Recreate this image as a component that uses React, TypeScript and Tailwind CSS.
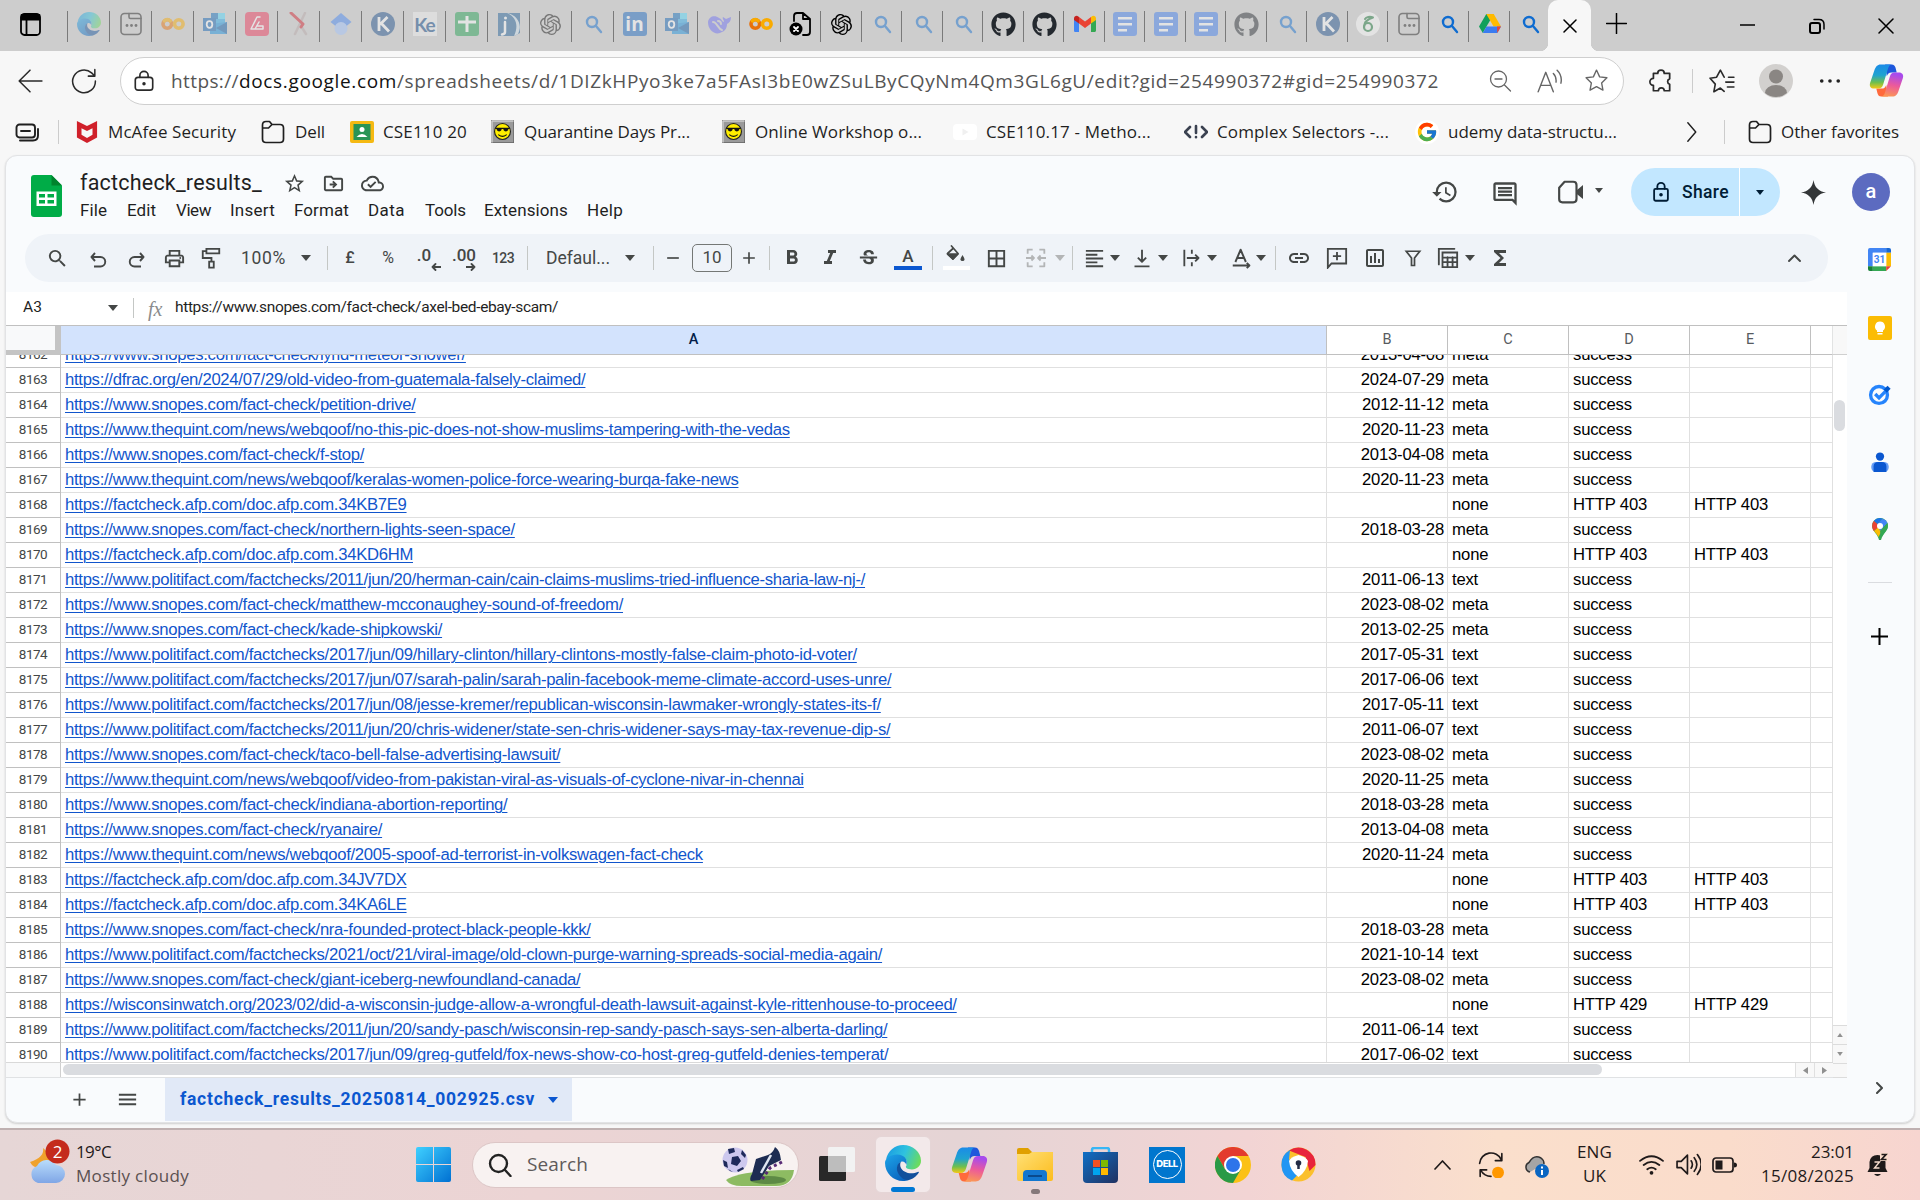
import { useLayoutEffect, useRef, useState, type ReactNode } from "react";
import { FaGithub } from "react-icons/fa";
import { FcGoogle } from "react-icons/fc";
import { SiOpenai } from "react-icons/si";
import {
  MdStarBorder, MdOutlineDriveFileMove, MdOutlineCloudDone, MdHistory, MdOutlineInsertComment,
  MdSearch, MdOutlinePrint, MdFormatBold, MdFormatItalic, MdStrikethroughS, MdBorderAll,
  MdFormatAlignLeft, MdLink, MdOutlineInsertChart, MdFunctions, MdMenu, MdAdd, MdRemove,
} from "react-icons/md";

/* Text that is tracked so that it fills exactly the given width. */
function Fit({ w, className = "", children }: { w: number; className?: string; children: string }) {
  const ref = useRef<HTMLSpanElement>(null);
  const [ls, setLs] = useState(0);
  useLayoutEffect(() => {
    if (ref.current) setLs((w - ref.current.getBoundingClientRect().width) / children.length);
  }, [w, children]);
  return (
    <span className="block shrink-0" style={{ width: w }}>
      <span ref={ref} className={"inline-block whitespace-pre " + className} style={{ letterSpacing: ls }}>{children}</span>
    </span>
  );
}

function Svg({ s = 24, h, vb = "0 0 24 24", className = "", sw = 1.5, children }: { s?: number; h?: number; vb?: string; className?: string; sw?: number; children: ReactNode }) {
  return (
    <svg width={s} height={h ?? s} viewBox={vb} fill="none" stroke="currentColor" strokeWidth={sw} strokeLinecap="round" strokeLinejoin="round" className={"shrink-0 " + className}>
      {children}
    </svg>
  );
}

/* ---------- logos ---------- */
const Defs = () => (
  <svg width="0" height="0" className="absolute">
    <defs>
      <linearGradient id="eg" x1="0" y1="0.3" x2="1" y2="0.6"><stop offset="0" stopColor="#1b9de2" /><stop offset=".5" stopColor="#2fc2df" /><stop offset="1" stopColor="#6ddc5a" /></linearGradient>
      <linearGradient id="eb" x1="0" y1="0" x2=".6" y2="1"><stop offset="0" stopColor="#1da4e8" /><stop offset="1" stopColor="#0a66c0" /></linearGradient>
      <linearGradient id="c1" x1="0" y1="0" x2="0" y2="1"><stop offset="0" stopColor="#1a8be8" /><stop offset=".45" stopColor="#1fa3cf" /><stop offset=".75" stopColor="#6fbf4d" /><stop offset="1" stopColor="#f5c815" /></linearGradient>
      <linearGradient id="c2" x1=".2" y1="0" x2="0" y2="1"><stop offset="0" stopColor="#a84bec" /><stop offset=".45" stopColor="#ec5a9a" /><stop offset="1" stopColor="#fda04b" /></linearGradient>
      <linearGradient id="cl" x1="0" y1="0" x2="0" y2="1"><stop offset="0" stopColor="#b9dcfb" /><stop offset="1" stopColor="#7fa6e6" /></linearGradient>
      <linearGradient id="wn" x1="0" y1="0" x2="1" y2="1"><stop offset="0" stopColor="#3fd0ff" /><stop offset="1" stopColor="#0070d2" /></linearGradient>
      <linearGradient id="fo" x1="0" y1="0" x2="1" y2="1"><stop offset="0" stopColor="#ffe076" /><stop offset="1" stopColor="#fcbc1d" /></linearGradient>
      <linearGradient id="st" x1="0" y1="0" x2="1" y2="1"><stop offset="0" stopColor="#0f6fc6" /><stop offset="1" stopColor="#213160" /></linearGradient>
    </defs>
  </svg>
);
const Edge = ({ s = 24 }) => (
  <Svg s={s}>
    <g stroke="none">
      <path fill="url(#eg)" d="M.7 9.5C2 4 6.5 0 12 0c6.7 0 12 4.8 12 10.500 0 3.500-2.800 5.800-6 5.800-3.500 0-4.400-1.300-4-2.100C15.500 12 14.500 7.300 9 7.300 5 7.300 1.600 8.500.7 9.500Z" />
      <path fill="url(#eb)" d="M0 12c0-3 3.500-5.600 8-5.600 5 0 7.500 3.600 6.200 7-.4-1.900-2.200-2.800-3.600-2.100-2.100 1.200-2.600 3.700-1.900 6 1.100 3.400 4.300 5.700 7.300 6-1.200.5-2.600.7-4 .7C5.400 24 0 18.600 0 12Z" />
      <path fill="#11509c" d="M10.600 11.300C8.100 12.300 7.500 15 8.200 17.500 9.500 21.500 13.500 24.200 16.500 23.200c3-.9 4.800-2.900 6-4.700.3-.5-.2-.8-.7-.5-4.300 2-10.300.5-11.500-3.500-.3-1.300-.2-2.500.3-3.200Z" />
    </g>
  </Svg>
);
const Copilot = ({ s = 34 }) => (
  <Svg s={s}>
    <g stroke="none">
      <path fill="#1d57dc" d="M11 1h4.500c1.600 0 2.300 1 2.700 2.300L19 6.500h-3.500c-2 0-2.700 1-3.300 2.500Z" />
      <path fill="#ff6a3c" d="M13 23H8.500c-1.600 0-2.300-1-2.700-2.300L5 17.500h3.500c2 0 2.700-1 3.300-2.500Z" />
      <path fill="url(#c1)" d="M15.800 1H8C5.700 1 4.500 2.600 3.700 5L.8 13.500C0 16 1.300 17.500 3.400 17.500h3c1.800 0 2.800-1 3.300-2.700L13 4c.5-1.700 1.200-3 2.800-3Z" />
      <path fill="url(#c2)" d="M8.200 23H16c2.300 0 3.500-1.600 4.300-4l2.900-8.500c.8-2.500-.5-4-2.600-4h-3c-1.800 0-2.800 1-3.300 2.700L11 20c-.5 1.700-1.200 3-2.800 3Z" />
    </g>
  </Svg>
);
const Colab = () => (
  <Svg s={24} sw={3.6}>
    <circle cx="6.300" cy="12" r="4.300" stroke="#e8710a" /><circle cx="17.800" cy="12" r="4.300" stroke="#f9ab00" /><path stroke="#f9ab00" d="M3.400 8.800a4.300 4.300 0 0 1 5.800 0" />
  </Svg>
);
const Outlook = () => (
  <Svg><g stroke="none"><path fill="#28a8ea" d="M8 1h14v12H8z" /><path fill="#0f6cbd" d="M8 1h7v6H8z" /><path fill="#50d9ff" d="M15 1h7v6h-7z" /><path fill="#1490df" d="M7 12 24 10v12H7z" /><path fill="#0a5ca8" d="M24 10v12L13 16Z" /><rect y="6" width="13" height="13" fill="#0f62b4" /></g><ellipse cx="6.500" cy="12.500" rx="2.800" ry="3.300" stroke="#fff" strokeWidth="1.800" /></Svg>
);
const Mag = () => <Svg sw={2.4} className="text-[#0f6cd0]"><circle cx="11" cy="10" r="5" /><path d="m15 14 5 6" /></Svg>;
const Docs = () => <Svg><g stroke="none"><rect width="24" height="24" rx="3" fill="#3d7df0" /><path fill="#fff" d="M5 5h14v2.500H5zM5 11h14v2.500H5zM5 17h9v2.500H5z" /></g></Svg>;
const PageDots = () => <Svg sw={1.6} className="text-[#222]"><rect x="2" y="1.500" width="20" height="21" rx="3.500" /><path d="M10 1.500v3.500q0 1.500 1.500 1.500H22" /><g fill="currentColor" stroke="none"><circle cx="8" cy="13.500" r="1.400" /><circle cx="12.500" cy="13.500" r="1.400" /><circle cx="17" cy="13.500" r="1.400" /></g></Svg>;
const KLogo = () => <Svg><circle cx="12" cy="12" r="12" fill="#1b4f8c" stroke="none" /><path d="M8 5v14M16.500 5 9 12.500M10 11l8 8.500" stroke="#fff" strokeWidth="2.800" strokeLinecap="butt" /></Svg>;
const GitHub = () => <FaGithub size={25} className="text-[#24292f]" />;
const Drive = () => <Svg><g stroke="none"><path fill="#11a05b" d="M8.300 2h7.400L4.800 21 1 14.600Z" /><path fill="#ffba00" d="M8.300 2h7.400L23 14.600h-7.400Z" /><path fill="#3b7cf0" d="M8.500 14.600H23L19.300 21H4.800Z" /><path fill="#ea4335" d="M19 14.600h4L19.300 21Z" /></g></Svg>;
const Gmail = () => <Svg><g stroke="none"><path fill="#4285f4" d="M1 7v11.500c0 1 .6 1.500 1.500 1.500H6V10Z" /><path fill="#34a853" d="M18 10v10h3.500c.9 0 1.500-.6 1.500-1.500V7Z" /><path fill="#ea4335" d="M6 5v6.500l6 4.500 6-4.500V5l-6 4.600Z" /><path fill="#c5221f" d="M1 6.500C1 4 3.800 3.200 5.300 4.400L6 5v6.500L1 8Z" /><path fill="#fbbc04" d="M23 6.500c0-2.500-2.800-3.300-4.300-2.100L18 5v6.500L23 8Z" /></g></Svg>;

const Letter = ({ bg, children }: { bg: string; children: ReactNode }) => <div className={"flex size-6 items-center justify-center leading-none font-bold " + bg}>{children}</div>;

const wideTabs: [ReactNode, boolean][] = [
  [<Edge />, true],
  [<PageDots />, true],
  [<Colab />, true],
  [<Outlook />, true],
  [<Svg><rect width="24" height="24" rx="4" fill="#f0355a" stroke="none" /><path d="M15 5h-3L6 17h4l4-7M10 17h8v-3h-6" stroke="#fff" /></Svg>, true],
  [<Svg sw={2.5}><path d="M18 1 8 22M14 14l5 8" stroke="#b9a9a9" /><path d="m4 1 12 11-2 3" stroke="#d3202c" strokeWidth="3" /></Svg>, true],
  [<Svg><path fill="#4285f4" stroke="none" d="M12 1 1.500 10l5 4h11l5-4Z" /><circle cx="12" cy="16.500" r="6.500" fill="#a0c3ff" stroke="none" /></Svg>, true],
  [<KLogo />, true],
  [<Letter bg="bg-[#f1f1f1] text-[#0b4686] text-[19px] font-['Lato'] tracking-[-1px]">Ke</Letter>, true],
  [<Svg><rect width="24" height="24" rx="3" fill="#1fa051" stroke="none" /><path d="M12 4v16M3 10h18" stroke="#fff" strokeWidth="3" strokeLinecap="butt" /></Svg>, true],
  [<Svg><path fill="#1d5d96" stroke="none" d="M1 1h22v20l-6 3H1z" /><path fill="#cfe3f0" stroke="none" d="M10 1c9 4 12 12 7 23l4-2C26 12 20 3 10 1Z" /><path d="M8 10v10q0 2-3 2.500" stroke="#fff" strokeWidth="2.500" /><circle cx="8.500" cy="6" r="1.500" fill="#fff" stroke="none" /></Svg>, true],
  [<SiOpenai size={21} className="text-[#111]" />, true],
  [<Mag />, true],
  [<Letter bg="rounded-[3px] bg-[#1667c0] text-white text-[19px] font-['Open_Sans']">in</Letter>, true],
  [<Outlook />, true],
  [<Svg><path fill="#6a6cf6" stroke="none" d="M1 10C2 4 8 3 12 6c3 1 3 4 5 4 0-2-2-3-1-5 1 1 2 1 3 2l5-2c0 4-2 6-4 7 0 4-2 7-5 8-6 4-14-1-14-10Z" /><path d="M6 10c4 0 5 7 9 8M11 9c2 0 3 1 3 3" stroke="#cdcdcd" strokeWidth="2" /></Svg>, true],
];
const tightTabs: [ReactNode, boolean][] = [
  [<Colab />, false],
  [<Svg sw={1.8} className="text-black"><path d="M5 9V4q0-3 3-3h6l7 6v13q0 3-3 3h-4M14 1v6h7" /><circle cx="7" cy="17" r="6.500" fill="#000" stroke="none" /><path d="m5 15 4 4m0-4-4 4" stroke="#fff" /></Svg>, false],
  [<SiOpenai size={21} className="text-black" />, false],
  [<Mag />, true],
  [<Mag />, true],
  [<Mag />, true],
  [<GitHub />, false],
  [<GitHub />, false],
  [<Gmail />, false],
  [<Docs />, true],
  [<Docs />, true],
  [<Docs />, true],
  [<GitHub />, true],
  [<Mag />, true],
  [<KLogo />, true],
  [<Svg><circle cx="12" cy="12" r="12" fill="#fff" stroke="none" /><circle cx="12" cy="15" r="4" stroke="#1c7a3b" strokeWidth="2.200" /><path d="M8 15C8 9 12 7 17 5.500 14 4 10 5 9 7" stroke="#1c7a3b" strokeWidth="2" /></Svg>, true],
  [<PageDots />, true],
  [<Mag />, false],
  [<Drive />, false],
  [<Mag />, false],
];

function TabBar() {
  const cell = ([icon, faded]: [ReactNode, boolean], i: number, w: string) => (
    <div key={i} className={"flex h-[31px] shrink-0 items-center justify-center border-l border-[#7a7a7a] pb-[5px] " + w}>
      <span className={faded ? "opacity-45" : ""}>{icon}</span>
    </div>
  );
  return (
    <div className="flex h-[51px] bg-[#cdcdcd] text-black">
      <div className="flex w-[67px] shrink-0 items-start justify-start pt-[13px] pl-[20px]">
        <Svg s={21} h={23} vb="0 0 21 23" sw={1.8}><rect x="1" y="1" width="19" height="21" rx="3.500" /><path d="M1.500 2h18v4.500h-18z" fill="currentColor" /><path d="M6.500 7v15" /></Svg>
      </div>
      <div className="mt-[11px] flex shrink-0">{wideTabs.map((t, i) => cell(t, i, "w-[42px]"))}</div>
      <div className="mt-[11px] flex w-[809px] shrink-0">{tightTabs.map((t, i) => cell(t, i, "w-[40.5px] pl-[2px]"))}</div>
      <div className="flex shrink-0 items-end">
        <div className="-ml-2 size-2 bg-[radial-gradient(circle_at_0_0,#cdcdcd_8px,#f7f7f7_8.500px)]" />
        <div className="flex h-[51px] w-[43px] items-center justify-center rounded-t-[10px] bg-[#f7f7f7]"><Svg s={14} vb="0 0 14 14"><path d="m1 1 12 12M13 1 1 13" /></Svg></div>
        <div className="size-2 bg-[radial-gradient(circle_at_100%_0,#cdcdcd_8px,#f7f7f7_8.500px)]" />
      </div>
      <Svg s={21} vb="0 0 21 21" className="mt-[13px] ml-[7px]"><path d="M10.500.5v20M.5 10.500h20" /></Svg>
      <Svg s={15} vb="0 0 15 15" className="mt-[17px] ml-[113px]"><path d="M0 8h15" /></Svg>
      <Svg s={16} vb="0 0 16 16" className="mt-[18px] ml-[54px]"><rect x="1" y="5" width="10" height="10" rx="2" strokeWidth="2" /><path d="M5 1.500h5q5 0 5 5V11" /></Svg>
      <Svg s={16} vb="0 0 16 16" className="mt-[18px] ml-[53px]"><path d="m1 1 14 14M15 1 1 15" /></Svg>
    </div>
  );
}

const Star = "m12 2 3 6.500 7 .9-5.100 4.900 1.300 7L12 17.900l-6.200 3.400 1.300-7L2 9.400l7-.9Z";

function AddressBar() {
  return (
    <div className="flex h-[59px] items-center text-[#2a2a2a]">
      <Svg s={26} className="ml-[17px]" sw={1.4}><path d="M23 12H2M12 2 2 12l10 10" /></Svg>
      <Svg s={26} className="ml-[28px]" sw={1.4}><path d="M22.500 12A10.500 10.500 0 1 1 19 4.500L21.500 7M22 1.500V7.500h-6" /></Svg>
      <div className="ml-[23px] flex h-[48px] w-[1504px] shrink-0 items-center rounded-full border border-[#cfcfcf] bg-white">
        <Svg s={22} className="ml-[12px]" sw={1.8}><rect x="2.500" y="8" width="19" height="14" rx="3" /><path d="M7.500 8V6a4.500 4.500 0 0 1 9 0v2" /><circle cx="12" cy="15" r="1" fill="currentColor" /></Svg>
        <div className="ml-[16px] flex pt-px font-['Open_Sans'] text-[19px] text-[#555]">
          <Fit w={68}>https://</Fit>
          <Fit w={158} className="text-[#111]">docs.google.com</Fit>
          <Fit w={1042}>/spreadsheets/d/1DIZkHPyo3ke7a5FAsI3bE0wZSuLByCQyNm4Qm3GL6gU/edit?gid=254990372#gid=254990372</Fit>
        </div>
        <Svg s={24} className="ml-[49px] text-[#666]" sw={1.3}><circle cx="10.500" cy="10" r="8" /><path d="M7 10h7m2.500 6 6 6" /></Svg>
        <Svg s={26} className="ml-[24px] text-[#666]" sw={1.3}><path d="m2 22 7-18 7 18M4.500 16h9M16 5q3 3 2.500 8M19.500 2q5 5 3.500 12" /></Svg>
        <Svg s={25} className="ml-[22px] text-[#666]" sw={1.3}><path d={Star} /></Svg>
      </div>
      <Svg s={26} className="ml-[24px]" sw={1.6}><path d="M5 5h4a3 3 0 0 1 6 0h5v5a2.600 2.600 0 0 0 0 5v6h-5a2.700 2.700 0 0 0-5.400 0H5v-5a3.200 3.200 0 1 1 0-6.500Z" /></Svg>
      <div className="ml-[18px] h-[24px] w-px bg-[#ccc]" />
      <Svg s={26} className="ml-[16px]" sw={1.5}><path d="M18 8.500h5M15.500 13h7.500M17 17.500h6M14 21.500l-3.500-3-6 3.400 1.300-7L1 9.400l6-.9L10.500 2l3.500 6.500" /></Svg>
      <svg width="34" height="34" viewBox="0 0 34 34" className="ml-[24px] shrink-0"><circle cx="17" cy="17" r="17" fill="#d2d0ce" /><circle cx="17" cy="12.500" r="7" fill="#8a8683" /><path fill="#8a8683" d="M6 29a11 8 0 0 1 22 0 17 17 0 0 1-22 0Z" /></svg>
      <Svg s={22} className="ml-[26px]" sw={0}><g fill="#222"><circle cx="3" cy="12" r="2" /><circle cx="12" cy="12" r="2" /><circle cx="21" cy="12" r="2" /></g></Svg>
      <div className="ml-[28px]"><Copilot s={35} /></div>
    </div>
  );
}

const Folder = () => <Svg s={24} sw={1.7}><path d="M1.500 5q0-3.500 3.500-3.500h3.500L11 4.500h8q3.500 0 3.500 3.500v11q0 3.500-3.500 3.500H5q-3.500 0-3.500-3.500ZM1.500 8h6L11 4.500" /></Svg>;
const Smiley = () => <Svg s={23}><rect width="24" height="24" fill="#9a9a9a" stroke="#666" /><path d="M1 23V1h22" stroke="#d0d0d0" /><circle cx="12" cy="12" r="8.300" fill="#ffee00" stroke="#222" strokeWidth="1.200" /><path d="M6 8.500h5v2q-1 1.500-2.500 1.500T6 10.500ZM13 8.500h5v2q-1 1.500-2.500 1.500T13 10.500Z" fill="#111" stroke="none" /><path d="M5 8.700h14M8 15.500q4 3 8 0" stroke="#111" strokeWidth="1.200" /></Svg>;

function Bookmarks() {
  return (
    <div className="flex h-[45px] items-center pb-[2px] font-['Open_Sans'] text-[17px] text-[#1f1f1f]">
      <Svg s={24} className="ml-[15px]" sw={1.9}><rect x="1.500" y="4.500" width="18.500" height="13" rx="3" /><path d="M6 11h9M5 20.500h13q5 0 5-5V9" /></Svg>
      <div className="ml-[19px] h-[24px] w-px bg-[#ccc]" />
      <Svg s={22} h={24} className="ml-[17px]"><path stroke="none" fill="#d0202a" d="M1 0 12 5.500 23 0v18L12 24 1 18ZM6 8v7l6 3.500 6-3.500V8l-6 3Z" /></Svg>
      <div className="ml-[10px]"><Fit w={128}>McAfee Security</Fit></div>
      <div className="ml-[25px]"><Folder /></div>
      <div className="ml-[10px]"><Fit w={30}>Dell</Fit></div>
      <Svg s={24} className="ml-[25px]"><g stroke="none"><rect y="1" width="24" height="22" rx="2" fill="#f5b912" /><rect x="3.500" y="4" width="17" height="16" fill="#2a9455" /><circle cx="12" cy="9.500" r="2.500" fill="#fff" /><path fill="#fff" d="M6.500 17q5.500-6 11 0Z" /></g></Svg>
      <div className="ml-[9px]"><Fit w={84}>CSE110 20</Fit></div>
      <div className="ml-[24px]"><Smiley /></div>
      <div className="ml-[10px]"><Fit w={166}>Quarantine Days Pr...</Fit></div>
      <div className="ml-[32px]"><Smiley /></div>
      <div className="ml-[10px]"><Fit w={167}>Online Workshop o...</Fit></div>
      <Svg s={24} className="ml-[31px]"><g stroke="none"><rect y="4" width="24" height="16" rx="4" fill="#fff" /><path fill="#f0f0f0" d="m9.500 8.500 6 3.500-6 3.500Z" /></g></Svg>
      <div className="ml-[9px]"><Fit w={165}>CSE110.17 - Metho...</Fit></div>
      <Svg s={24} className="ml-[33px] text-[#3a4150]" sw={2.6}><path d="m6 7-5 5 5 5M18 7l5 5-5 5M12 6v7M12 17v.2" /></Svg>
      <div className="ml-[9px]"><Fit w={172}>Complex Selectors -...</Fit></div>
      <div className="ml-[26px] flex size-[24px] items-center justify-center rounded-full bg-white"><FcGoogle size={22} /></div>
      <div className="ml-[9px]"><Fit w={169}>udemy data-structu...</Fit></div>
      <Svg s={20} className="ml-[65px]" sw={1.7}><path d="m7 1 9.500 11L7 23" /></Svg>
      <div className="ml-[22px] h-[24px] w-px bg-[#ccc]" />
      <div className="ml-[23px]"><Folder /></div>
      <div className="ml-[9px]"><Fit w={118}>Other favorites</Fit></div>
    </div>
  );
}

/* ---------- sheet header ---------- */
const Tri = ({ m, dim = false }: { m: string; dim?: boolean }) => <svg width="10" height="6" viewBox="0 0 10 6" className={"shrink-0 " + m}><path d="M0 0h10L5 6Z" fill={dim ? "#b3b5b6" : "#444746"} /></svg>;
const Sep = ({ m }: { m: string }) => <div className={"h-[24px] w-px shrink-0 bg-[#c4c7c5] " + m} />;
const Cell = ({ m, w = "w-[24px]", children }: { m: string; w?: string; children: ReactNode }) => <div className={`flex h-[24px] shrink-0 items-center justify-center ${w} ${m}`}>{children}</div>;

const menus: [string, number, string][] = [
  ["File", 27, ""], ["Edit", 29, "ml-[20px]"], ["View", 35, "ml-[20px]"], ["Insert", 45, "ml-[19px]"], ["Format", 55, "ml-[19px]"],
  ["Data", 37, "ml-[19px]"], ["Tools", 41, "ml-[20px]"], ["Extensions", 84, "ml-[18px]"], ["Help", 36, "ml-[19px]"],
];

function Header() {
  return (
    <div className="flex h-[78px] text-[#444746]">
      <svg width="31" height="42" viewBox="0 0 31 42" className="mt-[19px] ml-[25px] shrink-0"><path fill="#00ac47" d="M3 0h17.500L31 10.500V39a3 3 0 0 1-3 3H3a3 3 0 0 1-3-3V3a3 3 0 0 1 3-3Z" /><path fill="#00832d" d="M20.500 0 31 10.500H20.500Z" /><path fill="#fff" fillRule="evenodd" d="M5.500 16.500h20v14.500h-20ZM8 19v3.500h6V19Zm8.500 0v3.500H23V19ZM8 25v3.500h6V25Zm8.500 0v3.500H23V25Z" /></svg>
      <div className="ml-[18px] w-[560px] font-['Roboto']">
        <div className="mt-[13px] flex h-[28px] items-center">
          <Fit w={182} className="text-[21.5px] text-[#1f1f1f]">factcheck_results_</Fit>
          <MdStarBorder size={23} className="ml-[21px]" />
          <MdOutlineDriveFileMove size={23} className="ml-[16px]" />
          <MdOutlineCloudDone size={23} className="ml-[16px]" />
        </div>
        <div className="mt-[2px] flex h-[24px] items-center text-[17px] text-[#1f1f1f]">
          {menus.map(([t, w, m]) => <div key={t} className={m}><Fit w={w}>{t}</Fit></div>)}
        </div>
      </div>
      <div className="mt-[12px] mr-[24px] ml-auto flex h-[48px] items-center">
        <MdHistory size={28} />
        <MdOutlineInsertComment size={28} className="mt-[3px] ml-[32px]" />
        <Svg s={26} className="ml-[38px]" sw={2}><path d="M7 2.500h8q3 0 3 3v13q0 3-3 3H5q-3 0-3-3V8Z" /><path d="M18 10.500 24 5.500v13l-6-5Z" fill="currentColor" stroke="none" /></Svg>
        <svg width="8" height="5" viewBox="0 0 8 5" className="-mt-[4px] ml-[12px]"><path d="M0 0h8L4 5Z" fill="#444746" /></svg>
        <div className="ml-[28px] flex h-[48px] w-[149px] items-center rounded-full bg-[#c2e7ff] text-[#001d35]">
          <Svg s={22} className="ml-[19px]" sw={2}><rect x="4.500" y="8.500" width="15" height="13" rx="1.500" /><path d="M8 8.500V6a4 4 0 0 1 8 0v2.500" /><circle cx="12" cy="15" r="1" fill="currentColor" /></Svg>
          <div className="ml-[10px] font-['Roboto'] text-[17.5px] font-medium"><Fit w={47}>Share</Fit></div>
          <div className="ml-[10px] h-full w-px bg-white" />
          <svg width="8" height="5" viewBox="0 0 8 5" className="ml-[16px]"><path d="M0 0h8L4 5Z" fill="#001d35" /></svg>
        </div>
        <svg width="25" height="25" viewBox="0 0 24 24" className="ml-[21px]"><path fill="#333638" d="M12 0c1 7 5 11 12 12-7 1-11 5-12 12C11 17 7 13 0 12 7 11 11 7 12 0Z" /></svg>
        <div className="ml-[26px] flex size-[38px] items-center justify-center rounded-full bg-[#5c6bc0] pb-[2px] font-['Roboto'] text-[20px] font-medium text-white">a</div>
      </div>
    </div>
  );
}

function Toolbar() {
  return (
    <div className="ml-[19px] flex h-[48px] w-[1803px] items-center rounded-full bg-[#eff3f8] font-['Roboto'] text-[#444746]">
      <Cell m="ml-[20px]"><MdSearch size={23} /></Cell>
      <Cell m="ml-[17px]"><Svg s={17} vb="0 0 17 17" sw={1.9} className="mt-1"><path d="M5 1 1.500 5 5 9M2 5h8.500a4.500 4.500 0 0 1 0 9.500H4" strokeLinecap="butt" /></Svg></Cell>
      <Cell m="ml-[14px]"><Svg s={17} vb="0 0 17 17" sw={1.9} className="mt-1"><path d="m12 1 3.500 4L12 9M15 5H6.500a4.500 4.500 0 0 0 0 9.500H13" strokeLinecap="butt" /></Svg></Cell>
      <Cell m="ml-[14px]"><MdOutlinePrint size={23} /></Cell>
      <Cell m="ml-[13px]"><Svg s={22} sw={2}><path d="M7 2h14v5H7ZM7 4.500H3V12h9.500v4M10 16h5v6.500h-5Z" strokeLinejoin="miter" /></Svg></Cell>
      <div className="ml-[18px] text-[17.5px]"><Fit w={45}>100%</Fit></div>
      <Tri m="ml-[15px]" /><Sep m="ml-[16px]" />
      <Cell m="ml-[10px]"><span className="text-[16px] font-medium">£</span></Cell>
      <Cell m="ml-[14px]"><span className="text-[16px]">%</span></Cell>
      <Cell m="ml-[15px]"><div className="relative pt-[1px] pr-[6px] pb-[7px] text-[17px] leading-[18px] font-medium">.0<Svg s={10} vb="0 0 10 8" h={8} className="absolute right-[-4px] bottom-0" sw={1.8}><path d="M10 4H1.500M4.500 1l-3 3 3 3" /></Svg></div></Cell>
      <Cell m="ml-[13px]"><div className="relative pt-[1px] pb-[7px] text-[17px] leading-[18px] font-medium">.00<Svg s={10} vb="0 0 10 8" h={8} className="absolute right-0 bottom-0" sw={1.8}><path d="M0 4h8.500M5.500 1l3 3-3 3" /></Svg></div></Cell>
      <div className="ml-[16px] text-[14px] font-medium"><Fit w={22}>123</Fit></div>
      <Sep m="ml-[13px]" />
      <div className="ml-[18px] text-[17.5px]"><Fit w={64}>Defaul...</Fit></div>
      <Tri m="ml-[15px]" /><Sep m="ml-[18px]" />
      <Cell m="ml-[7px]"><MdRemove size={20} /></Cell>
      <div className="ml-[7px] flex h-[28px] w-[40px] items-center justify-center rounded-[5px] border border-[#747775] text-[17px]">10</div>
      <Cell m="ml-[5px]"><MdAdd size={20} /></Cell>
      <Sep m="ml-[8px]" />
      <Cell m="ml-[10px]"><MdFormatBold size={24} /></Cell>
      <Cell m="ml-[14px]"><MdFormatItalic size={24} /></Cell>
      <Cell m="ml-[14px]"><MdStrikethroughS size={23} /></Cell>
      <Cell m="ml-[14px]" w="w-[28px]"><div className="flex flex-col items-center"><span className="text-[17px] leading-[18px] font-medium">A</span><span className="mt-[1px] h-[4px] w-[28px] bg-[#0b57d0]" /></div></Cell>
      <Sep m="ml-[10px]" />
      <Cell m="ml-[9px]" w="w-[28px]"><div className="flex flex-col items-center pb-[2px]"><Svg s={20} h={19} vb="0 0 20 19" sw={1.7}><path d="M5.500 1 12 8.500 7 14 1.500 8.500 7 3.500" /><path d="M1.500 9H12l-5 5Z" fill="currentColor" /><path d="M16.500 10q4 6 0 6t0-6" fill="currentColor" stroke="none" /></Svg><span className="mt-[2px] h-[4px] w-[27px] bg-white" /></div></Cell>
      <Cell m="ml-[14px]"><MdBorderAll size={23} /></Cell>
      <Cell m="ml-[16px]"><Svg s={20} sw={2.2} className="text-[#b3b5b6]"><path d="M8 2H2v5M16 2h6v5M8 22H2v-5M16 22h6v-5M0 12h9M6.500 9l3 3-3 3M24 12h-9M17.500 9l-3 3 3 3" strokeLinecap="butt" /></Svg></Cell>
      <Tri m="ml-[7px]" dim /><Sep m="ml-[7px]" />
      <Cell m="ml-[9px]"><MdFormatAlignLeft size={23} /></Cell><Tri m="ml-[4px]" />
      <Cell m="ml-[10px]"><Svg s={20} h={20} sw={2.2}><path d="M12 2v14M7 11.500l5 5 5-5M3 22h18" strokeLinecap="butt" /></Svg></Cell><Tri m="ml-[4px]" />
      <Cell m="ml-[11px]"><Svg s={20} sw={2.2}><path d="M4 2v20M13 2v5M13 17v5M7 12h14M17 8l4 4-4 4" strokeLinecap="butt" /></Svg></Cell><Tri m="ml-[4px]" />
      <Cell m="ml-[12px]"><Svg s={21} sw={2.2}><path d="m5 16 6-14 6 14M7 11.500h8M2 20h19M18 17l3 3-3 3" strokeLinecap="butt" /></Svg></Cell><Tri m="ml-[3px]" />
      <Sep m="ml-[9px]" />
      <Cell m="ml-[11px]"><MdLink size={24} /></Cell>
      <Cell m="ml-[14px]"><Svg s={22} sw={2}><path d="M2 22.500V2h20v16H6ZM12 5.500v9M7.500 10h9" strokeLinejoin="miter" strokeLinecap="butt" /></Svg></Cell>
      <Cell m="ml-[14px]"><MdOutlineInsertChart size={24} /></Cell>
      <Cell m="ml-[14px]"><Svg s={18} sw={2.3}><path d="M3 3h18l-7 9v10h-4V12Z" strokeLinejoin="miter" /></Svg></Cell>
      <Cell m="ml-[11px]"><Svg s={22} sw={2}><path d="M2 19V2h17M6 6h16v16H6ZM6 11.500h16M6 16.500h16M11.500 11v11M17 11v11" strokeLinejoin="miter" /></Svg></Cell>
      <Tri m="ml-[5px]" />
      <Cell m="ml-[13px]"><MdFunctions size={24} /></Cell>
      <div className="mr-[22px] ml-auto"><Cell m=""><Svg s={13} vb="0 0 13 8" h={8} sw={1.9}><path d="m1 7 5.500-5.500L12 7" /></Svg></Cell></div>
    </div>
  );
}

function FormulaBar() {
  return (
    <div className="flex h-[33px] items-center bg-white pb-[2px] font-['Roboto'] text-[#1f1f1f]">
      <div className="ml-[17px] text-[15.5px]"><Fit w={19}>A3</Fit></div>
      <Tri m="ml-[66px]" />
      <div className="ml-[15px] h-[20px] w-px bg-[#c4c7c5]" />
      <span className="ml-[14px] w-[27px] pt-[2px] font-['Liberation_Serif'] text-[20px] leading-none text-[#8a8c8d] italic">fx</span>
      <Fit w={383} className="text-[15.5px]">https://www.snopes.com/fact-check/axel-bed-ebay-scam/</Fit>
    </div>
  );
}

/* ---------- grid ---------- */
const S = "https://www.snopes.com/fact-check/", P = "https://www.politifact.com/factchecks/", Q = "https://www.thequint.com/news/webqoof/", A = "https://factcheck.afp.com/doc.afp.com.";
const rows: [string, string, string, string, string?][] = [
  [S + "lyrid-meteor-shower/", "2013-04-08", "meta", "success"],
  ["https://dfrac.org/en/2024/07/29/old-video-from-guatemala-falsely-claimed/", "2024-07-29", "meta", "success"],
  [S + "petition-drive/", "2012-11-12", "meta", "success"],
  [Q + "no-this-pic-does-not-show-muslims-tampering-with-the-vedas", "2020-11-23", "meta", "success"],
  [S + "f-stop/", "2013-04-08", "meta", "success"],
  [Q + "keralas-women-police-force-wearing-burqa-fake-news", "2020-11-23", "meta", "success"],
  [A + "34KB7E9", "", "none", "HTTP 403", "HTTP 403"],
  [S + "northern-lights-seen-space/", "2018-03-28", "meta", "success"],
  [A + "34KD6HM", "", "none", "HTTP 403", "HTTP 403"],
  [P + "2011/jun/20/herman-cain/cain-claims-muslims-tried-influence-sharia-law-nj-/", "2011-06-13", "text", "success"],
  [S + "matthew-mcconaughey-sound-of-freedom/", "2023-08-02", "meta", "success"],
  [S + "kade-shipkowski/", "2013-02-25", "meta", "success"],
  [P + "2017/jun/09/hillary-clinton/hillary-clintons-mostly-false-claim-photo-id-voter/", "2017-05-31", "text", "success"],
  [P + "2017/jun/07/sarah-palin/sarah-palin-facebook-meme-climate-accord-uses-unre/", "2017-06-06", "text", "success"],
  [P + "2017/jun/08/jesse-kremer/republican-wisconsin-lawmaker-wrongly-states-its-f/", "2017-05-11", "text", "success"],
  [P + "2011/jun/20/chris-widener/state-sen-chris-widener-says-may-tax-revenue-dip-s/", "2011-06-07", "text", "success"],
  [S + "taco-bell-false-advertising-lawsuit/", "2023-08-02", "meta", "success"],
  [Q + "video-from-pakistan-viral-as-visuals-of-cyclone-nivar-in-chennai", "2020-11-25", "meta", "success"],
  [S + "indiana-abortion-reporting/", "2018-03-28", "meta", "success"],
  [S + "ryanaire/", "2013-04-08", "meta", "success"],
  [Q + "2005-spoof-ad-terrorist-in-volkswagen-fact-check", "2020-11-24", "meta", "success"],
  [A + "34JV7DX", "", "none", "HTTP 403", "HTTP 403"],
  [A + "34KA6LE", "", "none", "HTTP 403", "HTTP 403"],
  [S + "nra-founded-protect-black-people-kkk/", "2018-03-28", "meta", "success"],
  [P + "2021/oct/21/viral-image/old-clown-purge-warning-spreads-social-media-again/", "2021-10-14", "text", "success"],
  [S + "giant-iceberg-newfoundland-canada/", "2023-08-02", "meta", "success"],
  ["https://wisconsinwatch.org/2023/02/did-a-wisconsin-judge-allow-a-wrongful-death-lawsuit-against-kyle-rittenhouse-to-proceed/", "", "none", "HTTP 429", "HTTP 429"],
  [P + "2011/jun/20/sandy-pasch/wisconsin-rep-sandy-pasch-says-sen-alberta-darling/", "2011-06-14", "text", "success"],
  [P + "2017/jun/09/greg-gutfeld/fox-news-show-co-host-greg-gutfeld-denies-temperat/", "2017-06-02", "text", "success"],
];
const cols = "grid grid-cols-[55px_1266px_121px_121px_121px_121px_22px]";

function Grid() {
  return (
    <div className="flex h-[753px] border-t border-[#c0c0c0] bg-white">
      <div className="w-[1827px] shrink-0">
        <div className={cols + " h-[29px] font-['Roboto'] text-[14.5px] text-[#575b5f] *:flex *:items-center *:justify-center *:border-r *:border-b *:border-[#c0c0c0]"}>
          <div className="border-r-[6px]! border-b-[5px]! border-[#c4c4c4]! bg-[#f8f9fa]" />
          <div className="bg-[#d3e3fd] font-medium text-[#041e49]">A</div>
          <div>B</div><div>C</div><div>D</div><div>E</div><div className="border-r-[#e2e3e3]!" />
        </div>
        <div className="flex h-[708px] flex-col overflow-hidden border-b border-[#d9d9d9]">
          {rows.map(([url, date, kind, status, err], i) => (
            <div key={i} className={cols + " h-[25px] shrink-0 font-['Liberation_Sans'] text-[16.67px] leading-[24px] tracking-[-0.2px] text-black *:border-r *:border-b *:border-[#e0e0e0] *:pl-[4px] *:whitespace-nowrap" + (i === 0 ? " -mt-[13px]" : "")}>
              <div className="border-[#c0c0c0]! pr-[4px] text-center font-['Roboto'] text-[13.5px] tracking-[-0.5px] text-[#444746]">{8162 + i}</div>
              <div className="pt-[1px]"><span className="tracking-[-0.29px] text-[#1155cc] underline decoration-1 underline-offset-2">{url}</span></div>
              <div className="pt-[1px] pr-[3px] text-right">{date}</div>
              <div className="pt-[1px]">{kind}</div>
              <div className="pt-[1px]">{status}</div>
              <div className="pt-[1px]">{err}</div>
              <div />
            </div>
          ))}
        </div>
        <div className="flex h-[15px] border-b border-[#e0e2e4]">
          <div className="w-[55px] shrink-0 border-r border-[#d0d0d0] bg-[#f8f9fa]" />
          <div className="mt-[1px] ml-[2px] h-[11px] w-[1539px] shrink-0 rounded-full bg-[#dadce0]" />
          <div className="ml-auto flex *:flex *:w-[19px] *:items-center *:justify-center *:border-l *:border-[#e0e0e0] *:bg-[#f8f8f8]">
            <div><svg width="5" height="7" viewBox="0 0 5 7"><path d="M5 0v7L0 3.500Z" fill="#909090" /></svg></div>
            <div><svg width="5" height="7" viewBox="0 0 5 7"><path d="M0 0v7l5-3.500Z" fill="#909090" /></svg></div>
          </div>
        </div>
      </div>
      <div className="flex w-[14px] shrink-0 flex-col">
        <div className="h-[29px] border-b border-[#d0d0d0] bg-[#f8f8f8]" />
        <div className="mt-[45px] ml-[1px] h-[31px] w-[11px] rounded-full bg-[#dadce0]" />
        <div className="mt-auto flex flex-col *:flex *:h-[19px] *:items-center *:justify-center *:border-t *:border-[#dcdcdc] *:bg-[#f8f8f8]">
          <div><svg width="6" height="4" viewBox="0 0 7 5"><path d="M0 5h7L3.500 0Z" fill="#909090" /></svg></div>
          <div><svg width="6" height="4" viewBox="0 0 7 5"><path d="M0 0h7L3.500 5Z" fill="#909090" /></svg></div>
        </div>
        <div className="h-[15px] border-t border-b border-[#dcdcdc] bg-[#f8f8f8]" />
      </div>
    </div>
  );
}

function SidePanel() {
  return (
    <div className="flex flex-1 flex-col items-center pr-[2px]">
      <Svg s={23} className="mt-[14px]"><g stroke="none"><path fill="#4285f4" d="M2 0h17v5H5v14H0V2q0-2 2-2Z" /><path fill="#1967d2" d="M19 0h3q2 0 2 2v3h-5Z" /><path fill="#fbbc04" d="M19 5h5v14h-5Z" /><path fill="#34a853" d="M5 19h14v5H5Z" /><path fill="#188038" d="M0 19h5v5H2q-2 0-2-2Z" /><path fill="#ea4335" d="M19 19h5l-5 5Z" /><path fill="#fff" d="M5 5h14v14H5z" /><text x="12" y="16" fontSize="10.500" fontWeight="700" textAnchor="middle" fill="#4285f4" fontFamily="Roboto">31</text></g></Svg>
      <Svg s={24} className="mt-[45px]"><g stroke="none"><rect width="24" height="24" rx="2" fill="#fbbc04" /><path fill="#fff" d="M12 5.500a5 5 0 0 1 3 9V16H9v-1.500a5 5 0 0 1 3-9ZM9.500 17h5v1.500h-5z" /></g></Svg>
      <Svg s={23} className="mt-[43px]"><circle cx="11.500" cy="12.500" r="8.800" stroke="#2684fc" strokeWidth="3.500" /><path d="m7.500 11.500 4 4 8-8" stroke="#2684fc" strokeWidth="3.500" strokeLinecap="butt" strokeLinejoin="miter" /><path d="m18 8.500 4-4" stroke="#0057cc" strokeWidth="4.500" strokeLinecap="butt" /></Svg>
      <Svg s={22} className="mt-[45px]"><g stroke="none"><circle cx="12" cy="6" r="4.500" fill="#0b57d0" /><rect x="2.500" y="12" width="19" height="11" rx="5" fill="#669df6" /><path fill="#0b57d0" d="M10 12h4q5 0 5 5v6H5v-6q0-5 5-5Z" /></g></Svg>
      <svg width="16" height="22" viewBox="0 0 16 22" className="mt-[45px]"><path fill="#34a853" d="M0 8a8 8 0 0 1 16 0c0 5-5 7-7 14H7C6 16 0 13 0 8Z" /><path fill="#fbbc04" d="M2 13 13 1.500 8 16q-1 2-1.500 3Q5 16 2 13Z" /><path fill="#ea4335" d="M1.900 2.800 8 8l-6.500 5Q-1.500 7 1.900 2.800Z" /><path fill="#1a73e8" d="M1.900 2.800Q5 -1 10.500.5L5.500 6Z" /><path fill="#4285f4" d="M10.500.4Q14 1.500 15.500 5L8 13 5.500 6Z" /><path fill="#34a853" d="M15.500 5Q17 10 13 14l-3.500 5L8 13Z" /><circle cx="8" cy="8" r="3" fill="#fff" /></svg>
      <div className="mt-[42px] h-px w-[24px] bg-[#dadce0]" />
      <Svg s={17} vb="0 0 16 16" className="mt-[45px] text-black" sw={1.9}><path d="M8 0v16M0 8h16" strokeLinecap="butt" /></Svg>
      <Svg s={7} h={12} vb="0 0 7 12" className="mt-auto mb-[28px] text-[#444746]" sw={2}><path d="m1 1 5 5-5 5" /></Svg>
    </div>
  );
}

function SheetTabs() {
  return (
    <div className="flex h-[43px] w-[1841px] items-center font-['Roboto'] text-[#444746]">
      <MdAdd size={21} className="ml-[63px]" />
      <MdMenu size={23} className="ml-[26px]" />
      <div className="ml-[26px] flex h-full w-[407px] items-center bg-[#e1e9f7]">
        <div className="ml-[15px] text-[17.5px] font-bold text-[#0b57d0]"><Fit w={355}>factcheck_results_20250814_002925.csv</Fit></div>
        <svg width="10" height="6" viewBox="0 0 10 6" className="ml-[13px]"><path d="M0 0h10L5 6Z" fill="#0b57d0" /></svg>
      </div>
    </div>
  );
}

/* ---------- taskbar ---------- */
function Taskbar() {
  return (
    <div className="flex h-[72px] items-center border-t-2 border-[#bfb0b0] bg-[linear-gradient(90deg,#e6d6d6_0%,#ecd4d4_28%,#e5d4d5_50%,#f2d4d4_65%,#fadfcc_78%,#fadccb_90%,#f7d5d0_100%)] pb-px font-['Open_Sans'] text-[17px] text-[#1f1a1a]">
      <svg width="42" height="46" viewBox="0 0 42 46" className="mb-[6px] ml-[28px] shrink-0">
        <path fill="#f0a22c" d="M15 9q2 9-13 14 3 6 10 6 12-3 12-12Z" />
        <path fill="url(#cl)" d="M10 44a9 9 0 0 1-1-17 11 11 0 0 1 19-1 9 9 0 0 1 0 18Z" />
        <circle cx="29.500" cy="12.500" r="12" fill="#c42b1c" />
        <text x="29.500" y="18.500" textAnchor="middle" fill="#fff" fontSize="17" fontFamily="Open Sans">2</text>
      </svg>
      <div className="ml-[6px] pb-px leading-[24px]">
        <Fit w={35}>19°C</Fit>
        <Fit w={113} className="text-[#5a5050]">Mostly cloudy</Fit>
      </div>
      <svg width="35" height="35" viewBox="0 0 35 35" className="ml-[227px] shrink-0" fill="url(#wn)"><path d="M0 2q0-2 2-2h15v17H0ZM18 0h15q2 0 2 2v15H18ZM0 18h17v17H2q-2 0-2-2ZM18 18h17v15q0 2-2 2H18Z" /></svg>
      <div className="ml-[21px] flex h-[46px] w-[327px] shrink-0 items-center overflow-hidden rounded-full border border-[#dcc6c6] bg-[#f8f2f1]">
        <Svg s={24} className="ml-[15px] text-[#222]" sw={2.4}><circle cx="10.500" cy="10.500" r="8.500" /><path d="m17 17 5.500 6" /></Svg>
        <div className="ml-[15px] text-[19px] text-[#5f5a5a]"><Fit w={61}>Search</Fit></div>
        <svg width="76" height="42" viewBox="0 0 76 42" className="ml-[134px] shrink-0">
          <path fill="#8dbb62" d="M4 36Q20 26 72 26q-2 16-18 16H20Q8 42 4 36Z" />
          <ellipse cx="46" cy="36" rx="18" ry="4" fill="#5d8a45" />
          <circle cx="13" cy="16" r="12.500" fill="#cdc8ee" />
          <path fill="#1e2a5a" d="m10 13 6-1 3 5-4 5-6-2ZM6 5l6-1 1 4-6 2ZM20 6l4 5-1 3-4-4ZM1 16l4 2 1 6-4-2ZM15 26l6-3 1 2-6 3ZM6 25l5 3-3-1Z" />
          <path fill="#1d2c52" d="M53 3q5 3 6 13l-12 6-9 14-9 1q-2-3 1-7l4-15 12-4q5-2 7-8Z" />
          <path stroke="#dfe6f2" strokeWidth="2.500" d="m49 11-10 18" />
          <path stroke="#582a75" strokeWidth="3" strokeDasharray="3 3" fill="none" d="M60 18 48 24 39 37" />
        </svg>
      </div>
      <svg width="36" height="35" viewBox="0 0 36 35" className="ml-[20px] shrink-0"><rect y="9" width="27" height="25" rx="1.500" fill="#282828" /><rect x="9" width="27" height="25" rx="1.500" fill="#f2f2f2" /><path d="M9 9h18v16H9z" fill="#bdbdbd" /></svg>
      <div className="ml-[20px] flex h-[57px] w-[56px] shrink-0 flex-col items-center justify-end rounded-[6px] border border-[#e5d5d6] bg-[#f3e9ea]">
        <Edge s={36} /><span className="mt-[6px] h-[5px] w-[24px] shrink-0 rounded-full bg-[#0078d4]" />
      </div>
      <div className="ml-[20px]"><Copilot s={37} /></div>
      <div className="ml-[29px] flex flex-col items-center pt-[12px]">
        <svg width="36" height="35" viewBox="0 0 36 35"><path fill="#e0a000" d="M0 2q0-2 2-2h9l4 4v6H0Z" /><path fill="url(#fo)" d="M0 6h12l3-2h21v27q0 2-2 2H2q-2 0-2-2Z" /><path fill="#1377cf" d="M6 33v-7q0-4 4-4h16q4 0 4 4v7Z" /><path stroke="#0a4a8c" strokeWidth="2" d="M11 28h14" /></svg>
        <span className="mt-[6px] h-[5px] w-[9px] rounded-full bg-[#85787a]" />
      </div>
      <svg width="35" height="36" viewBox="0 0 35 36" className="ml-[30px] shrink-0"><path fill="none" stroke="#37b6f5" strokeWidth="2.500" d="M9 7V3q0-2 2-2h13q2 0 2 2v4" /><path fill="url(#st)" d="M0 5h35v27q0 4-4 4H4q-4 0-4-4Z" /><path fill="#f25022" d="M10 13h7v7h-7z" /><path fill="#7fba00" d="M18 13h7v7h-7z" /><path fill="#00a4ef" d="M10 21h7v7h-7z" /><path fill="#ffb900" d="M18 21h7v7h-7z" /></svg>
      <div className="ml-[31px] flex size-[36px] shrink-0 items-center justify-center bg-[#0076ce]"><div className="flex size-[29px] items-center justify-center rounded-full border-[1.5px] border-white font-['Inter'] text-[9.5px] font-extrabold tracking-[-0.5px] text-white">DELL</div></div>
      <svg width="36" height="36" viewBox="0 0 36 36" className="ml-[30px] shrink-0"><circle cx="18" cy="18" r="18" fill="#fbc116" /><path fill="#e33b2e" d="M2.400 9A18 18 0 0 1 33.600 9H18v9l-7.800 4.500Z" /><path fill="#2a9a47" d="M2.400 9 10.200 22.500 18 18 25.800 22.500 18 36A18 18 0 0 1 2.400 9Z" /><circle cx="18" cy="18" r="9" fill="#fff" /><circle cx="18" cy="18" r="7" fill="#2d74ea" /></svg>
      <svg width="35" height="35" viewBox="0 0 35 35" className="ml-[30px] shrink-0"><circle cx="17.500" cy="17.500" r="17" fill="#fbc02d" /><path fill="#e8243c" d="M8 3.500A17 17 0 0 1 34.500 18l-6 6-4-14Z" /><path fill="#2196f3" d="M9 3A17 17 0 0 0 11 33.500l5-5L8 12Z" /><path fill="#fff" d="M17.500 8q8 2 9.500 6-1 10-9.500 16-8.500-6-9.500-16 1.500-4 9.500-6Z" /><circle cx="17.500" cy="16" r="2.800" fill="#222b45" /><path d="M17.500 17v5" stroke="#222b45" strokeWidth="2.500" /></svg>
      <Svg s={17} h={10} vb="0 0 17 10" className="ml-[118px]" sw={1.7}><path d="m1 9 7.500-8L16 9" /></Svg>
      <Svg s={26} className="ml-[27px]" sw={1.5}><path d="M1.500 10.500A10.500 10.500 0 0 1 21.500 7M22 1.500V8h-6M12 22.500Q6 22.500 2.500 17M2 22.500V16.500h6" /><circle cx="18.500" cy="19" r="5.500" fill="#ff9800" stroke="none" /></Svg>
      <svg width="25" height="24" viewBox="0 0 25 24" className="mt-[4px] ml-[20px] shrink-0"><path fill="#a5a5a5" stroke="#333" strokeWidth="1.500" d="M6 17a5 5 0 0 1-1-9.500Q10-1 17 3q3 2 3 6" /><circle cx="18" cy="16" r="7" fill="#0a66c2" /><path stroke="#fff" strokeWidth="2" d="M18 15v5M18 11.500v2" /></svg>
      <div className="ml-[28px] flex flex-col items-center pb-px leading-[24px]"><Fit w={35}>ENG</Fit><Fit w={23}>UK</Fit></div>
      <Svg s={25} className="ml-[27px]" sw={1.8}><path d="M1 8.500q11-9 22 0M4.500 12.500q7.500-6 15 0M8 16.500q4-3 8 0" /><circle cx="12" cy="20" r="1.800" fill="currentColor" stroke="none" /></Svg>
      <Svg s={25} className="ml-[12px]" sw={1.6}><path d="M1 9h4l6-6v18l-6-6H1ZM14.500 8.500q2.500 3.500 0 7M17.500 5.500q5 6.500 0 13M20.500 2.500q7.500 9.500 0 19" /></Svg>
      <svg width="25" height="16" viewBox="0 0 25 16" className="ml-[11px] shrink-0"><rect x="1" y="1" width="20" height="14" rx="3" fill="none" stroke="#1f1a1a" strokeWidth="1.700" /><path fill="#1f1a1a" d="M3.500 3.500h7v9h-7zM22 5.500q3 0 3 2.500t-3 2.500Z" /></svg>
      <div className="ml-[24px] flex flex-col items-end pb-px leading-[24px]"><Fit w={43}>23:01</Fit><Fit w={93}>15/08/2025</Fit></div>
      <svg width="21" height="24" viewBox="0 0 21 24" className="ml-[13px] shrink-0"><path fill="#1f1a1a" d="M2.500 15V9q1-7 8-7 7 0 8 7v6l2 4H.5ZM7 21h7q-3.500 4-7 0Z" /><path fill="#fadccb" d="M13 0h8v8h-8z" /><path fill="none" stroke="#1f1a1a" strokeWidth="1.700" d="M14.500 1.500h4.500l-4.500 5h5" /><path fill="none" stroke="#f7dccd" strokeWidth="1.400" d="M7.500 9h5l-5 6h5" /></svg>
    </div>
  );
}

export default function App() {
  return (
    <div className="flex h-[1200px] w-[1920px] flex-col overflow-hidden bg-[#f7f7f7]">
      <Defs />
      <TabBar />
      <AddressBar />
      <Bookmarks />
      <div className="ml-[5px] flex h-[968px] w-[1910px] shrink-0 flex-col overflow-hidden rounded-[12px] border border-[#e2e3e5] bg-[#f9fbfd] shadow-[0_1px_2px_#cfcfcf]">
        <Header />
        <div className="flex flex-1">
          <div className="flex w-[1841px] shrink-0 flex-col">
            <Toolbar />
            <div className="h-[10px]" />
            <FormulaBar />
            <Grid />
            <SheetTabs />
          </div>
          <SidePanel />
        </div>
      </div>
      <div className="mt-auto"><Taskbar /></div>
    </div>
  );
}
